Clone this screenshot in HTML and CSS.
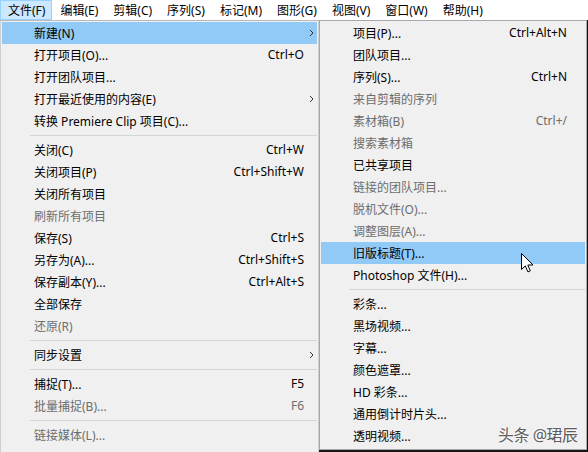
FILE: index.html
```html
<!DOCTYPE html>
<html lang="zh-CN">
<head>
  <meta charset="UTF-8" />
  <title>文件菜单</title>
  <link rel="stylesheet" href="styles.css">
</head>
<body>
  <div class="screen">
    <nav class="menubar">
      <span class="top-item active">文件(F)</span>
      <span class="top-item">编辑(E)</span>
      <span class="top-item">剪辑(C)</span>
      <span class="top-item">序列(S)</span>
      <span class="top-item">标记(M)</span>
      <span class="top-item">图形(G)</span>
      <span class="top-item">视图(V)</span>
      <span class="top-item">窗口(W)</span>
      <span class="top-item">帮助(H)</span>
    </nav>

    <div class="menus">
      <ul class="menu main-menu">
        <li class="row hover"><span class="label">新建(N)</span><span class="key"></span><span class="more"><svg viewBox="0 0 5 8"><path d="M1 1l3 3-3 3"/></svg></span></li>
        <li class="row"><span class="label">打开项目(O)...</span><span class="key">Ctrl+O</span><span class="more"></span></li>
        <li class="row"><span class="label">打开团队项目...</span><span class="key"></span><span class="more"></span></li>
        <li class="row"><span class="label">打开最近使用的内容(E)</span><span class="key"></span><span class="more"><svg viewBox="0 0 5 8"><path d="M1 1l3 3-3 3"/></svg></span></li>
        <li class="row"><span class="label">转换 Premiere Clip 项目(C)...</span><span class="key"></span><span class="more"></span></li>
        <li class="sep"></li>
        <li class="row"><span class="label">关闭(C)</span><span class="key">Ctrl+W</span><span class="more"></span></li>
        <li class="row"><span class="label">关闭项目(P)</span><span class="key">Ctrl+Shift+W</span><span class="more"></span></li>
        <li class="row"><span class="label">关闭所有项目</span><span class="key"></span><span class="more"></span></li>
        <li class="row off"><span class="label">刷新所有项目</span><span class="key"></span><span class="more"></span></li>
        <li class="row"><span class="label">保存(S)</span><span class="key">Ctrl+S</span><span class="more"></span></li>
        <li class="row"><span class="label">另存为(A)...</span><span class="key">Ctrl+Shift+S</span><span class="more"></span></li>
        <li class="row"><span class="label">保存副本(Y)...</span><span class="key">Ctrl+Alt+S</span><span class="more"></span></li>
        <li class="row"><span class="label">全部保存</span><span class="key"></span><span class="more"></span></li>
        <li class="row off"><span class="label">还原(R)</span><span class="key"></span><span class="more"></span></li>
        <li class="sep"></li>
        <li class="row"><span class="label">同步设置</span><span class="key"></span><span class="more"><svg viewBox="0 0 5 8"><path d="M1 1l3 3-3 3"/></svg></span></li>
        <li class="sep"></li>
        <li class="row"><span class="label">捕捉(T)...</span><span class="key">F5</span><span class="more"></span></li>
        <li class="row off"><span class="label">批量捕捉(B)...</span><span class="key">F6</span><span class="more"></span></li>
        <li class="sep"></li>
        <li class="row off"><span class="label">链接媒体(L)...</span><span class="key"></span><span class="more"></span></li>
      </ul>

      <ul class="menu sub-menu">
        <li class="row"><span class="label">项目(P)...</span><span class="key">Ctrl+Alt+N</span><span class="more"></span></li>
        <li class="row"><span class="label">团队项目...</span><span class="key"></span><span class="more"></span></li>
        <li class="row"><span class="label">序列(S)...</span><span class="key">Ctrl+N</span><span class="more"></span></li>
        <li class="row off"><span class="label">来自剪辑的序列</span><span class="key"></span><span class="more"></span></li>
        <li class="row off"><span class="label">素材箱(B)</span><span class="key">Ctrl+/</span><span class="more"></span></li>
        <li class="row off"><span class="label">搜索素材箱</span><span class="key"></span><span class="more"></span></li>
        <li class="row"><span class="label">已共享项目</span><span class="key"></span><span class="more"></span></li>
        <li class="row off"><span class="label">链接的团队项目...</span><span class="key"></span><span class="more"></span></li>
        <li class="row off"><span class="label">脱机文件(O)...</span><span class="key"></span><span class="more"></span></li>
        <li class="row off"><span class="label">调整图层(A)...</span><span class="key"></span><span class="more"></span></li>
        <li class="row hover"><span class="label">旧版标题(T)...</span><span class="key"></span><span class="more"></span></li>
        <li class="row"><span class="label">Photoshop 文件(H)...</span><span class="key"></span><span class="more"></span></li>
        <li class="sep"></li>
        <li class="row"><span class="label">彩条...</span><span class="key"></span><span class="more"></span></li>
        <li class="row"><span class="label">黑场视频...</span><span class="key"></span><span class="more"></span></li>
        <li class="row"><span class="label">字幕...</span><span class="key"></span><span class="more"></span></li>
        <li class="row"><span class="label">颜色遮罩...</span><span class="key"></span><span class="more"></span></li>
        <li class="row"><span class="label">HD 彩条...</span><span class="key"></span><span class="more"></span></li>
        <li class="row"><span class="label">通用倒计时片头...</span><span class="key"></span><span class="more"></span></li>
        <li class="row"><span class="label">透明视频...</span><span class="key"></span><span class="more"></span></li>
      </ul>
    </div>

    <div class="watermark">头条 @珺辰</div>

    <svg class="cursor" viewBox="0 0 13 20" width="13" height="20">
      <path d="M0.5 0.5v16l3.8-3.6 2.6 6 2.4-1-2.5-5.9h5.2z"/>
    </svg>
  </div>
</body>
</html>
```

FILE: styles.css
```css
body {
  margin: 0;
  font-family: "Noto Sans", "Noto Sans CJK SC", sans-serif;
  font-size: 12px;
  color: #000;
}
.screen {
  position: relative;
  width: 588px;
  height: 452px;
  overflow: hidden;
  background: #1c1c1c;
}
.menubar {
  display: flex;
  height: 20px;
  background: #fff;
}
.top-item {
  display: flex;
  align-items: center;
  padding: 0 6px 1px 7px;
  border: 1px solid transparent;
  box-sizing: border-box;
  height: 20px;
}
.top-item.active {
  background: #cce8ff;
  border-color: #99d1ff;
}
.menus {
  display: flex;
  align-items: flex-start;
}
.menu {
  list-style: none;
  margin: 0;
  padding: 1px 1px 2px;
  background: #f0f0f0;
  box-sizing: border-box;
}
.main-menu {
  width: 319px;
  min-height: 440px;
  border: 1px solid #cfcfcf;
  border-top-color: #b9b9b9;
}
.sub-menu {
  width: 268px;
  border: 1px solid #a8a8a8;
  box-shadow: 3px 3px 3px rgba(0,0,0,0.25);
}
.row {
  display: flex;
  align-items: center;
  height: 22px;
  padding: 0 0 1px 32px;
  box-sizing: border-box;
  white-space: nowrap;
}
.row.hover { background: #91c9f7; }
.row.off { color: #6d6d6d; }
.label { flex: 1; }
.key { text-align: right; }
.more {
  width: 13px;
  display: flex;
  justify-content: flex-end;
  padding-right: 3px;
  box-sizing: border-box;
}
.sub-menu .more { width: 18px; }
.more svg {
  width: 5px;
  height: 8px;
  fill: none;
  stroke: #333;
  stroke-width: 1;
}
.sep {
  height: 7px;
  display: flex;
  align-items: center;
  margin-left: 28px;
}
.sep::after {
  content: "";
  flex: 1;
  height: 1px;
  background: #d5d5d5;
}
.watermark {
  position: absolute;
  left: 498px;
  top: 422px;
  font-size: 16px;
  color: #5e5e5e;
  letter-spacing: -0.5px;
  text-shadow: 0 0 2px #fff, 0 0 2px #fff;
}
.cursor {
  position: absolute;
  left: 521px;
  top: 253px;
}
.cursor path {
  fill: #fff;
  stroke: #000;
  stroke-width: 1;
}
```
